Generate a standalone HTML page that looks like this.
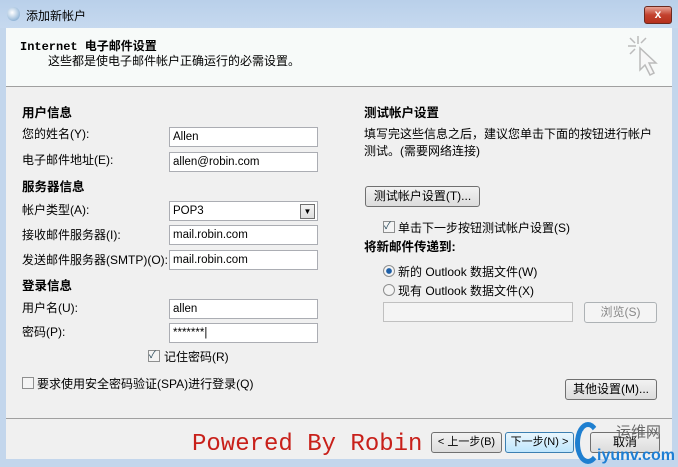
<!DOCTYPE html>
<html><head><meta charset="utf-8"><style>
*{box-sizing:border-box;margin:0;padding:0}
body{width:678px;height:467px;overflow:hidden;background:#c3d6ec;font-family:"Liberation Sans","Noto Sans CJK SC",sans-serif;font-size:12px;color:#000;position:relative}
.a{position:absolute;white-space:nowrap}
.title{left:0;top:0;width:678px;height:28px;background:linear-gradient(#b9d0ea,#c6d9ef)}
.hdr{left:6px;top:28px;width:666px;height:59px;background:#f7faf9;border-bottom:1px solid #a0a0a0}
.bodyp{left:6px;top:87px;width:666px;height:372px;background:#f0f0f0}
.inp{position:absolute;height:20px;border:1px solid #abadb3;background:#fff;padding:3px 3px;font-size:11.5px;line-height:13px}
.btn{position:absolute;height:21px;border:1px solid #707070;border-radius:3px;background:linear-gradient(#f2f2f2,#dcdcdc);text-align:center;line-height:19px;font-size:12px}
.h{font-weight:bold;font-size:12.5px}
.cb{position:absolute;width:12px;height:12px;border:1px solid #8e8f8f;background:#f4f4f4}
.rd{position:absolute;width:12px;height:12px;border:1px solid #8e8f8f;border-radius:50%;background:#f4f4f4}
</style></head><body>
<div class="a title"></div>
<div class="a" style="left:7px;top:7px;width:13px;height:14px;border-radius:50%;background:radial-gradient(circle at 40% 40%,#fff,#6a9ac8)"></div>
<div class="a" style="left:26px;top:7px;font-size:12px">添加新帐户</div>
<div class="a" style="left:644px;top:6px;width:28px;height:18px;border:1px solid #6b2a20;border-radius:3px;background:linear-gradient(#e8a396,#c3412e 50%,#b5301c);color:#fff;font-weight:bold;text-align:center;line-height:15px;font-size:12px">x</div>
<div class="a hdr"></div>
<div class="a" style="left:20px;top:37px;font-family:'Liberation Mono','Noto Sans CJK SC',monospace;font-weight:bold;font-size:12px">Internet 电子邮件设置</div>
<div class="a" style="left:48px;top:52px;font-size:12px">这些都是使电子邮件帐户正确运行的必需设置。</div>
<svg class="a" style="left:624px;top:32px" width="40" height="52"><g stroke="#bbb" stroke-width="1.5" fill="none"><path d="M14 4v8M4 14h8M6 6l5 5M22 6l-5 5M6 22l5-5"/><path d="M16 16l0 22 5-5 5 10 4-2-5-10 7 0z" fill="#f7f7f7"/></g></svg>
<div class="a bodyp"></div>

<div class="a h" style="left:22px;top:102px">用户信息</div>
<div class="a" style="left:22px;top:125px">您的姓名(Y):</div>
<div class="inp" style="left:169px;top:127px;width:149px">Allen</div>
<div class="a" style="left:22px;top:151px">电子邮件地址(E):</div>
<div class="inp" style="left:169px;top:152px;width:149px">allen@robin.com</div>
<div class="a h" style="left:22px;top:176px">服务器信息</div>
<div class="a" style="left:22px;top:201px">帐户类型(A):</div>
<div class="inp" style="left:169px;top:201px;width:149px">POP3</div>
<div class="a" style="left:300px;top:204px;width:15px;height:15px;border:1px solid #707070;background:linear-gradient(#f4f4f4,#ddd);font-size:8px;text-align:center;line-height:14px">▼</div>
<div class="a" style="left:22px;top:226px">接收邮件服务器(I):</div>
<div class="inp" style="left:169px;top:225px;width:149px">mail.robin.com</div>
<div class="a" style="left:22px;top:251px">发送邮件服务器(SMTP)(O):</div>
<div class="inp" style="left:169px;top:250px;width:149px">mail.robin.com</div>
<div class="a h" style="left:22px;top:275px">登录信息</div>
<div class="a" style="left:22px;top:299px">用户名(U):</div>
<div class="inp" style="left:169px;top:299px;width:149px">allen</div>
<div class="a" style="left:22px;top:323px">密码(P):</div>
<div class="inp" style="left:169px;top:323px;width:149px">*******|</div>
<div class="cb" style="left:148px;top:350px;font-size:10px;line-height:10px;color:#245">✓</div>
<div class="a" style="left:164px;top:348px">记住密码(R)</div>
<div class="cb" style="left:22px;top:377px"></div>
<div class="a" style="left:37px;top:375px">要求使用安全密码验证(SPA)进行登录(Q)</div>

<div class="a h" style="left:364px;top:102px">测试帐户设置</div>
<div class="a" style="left:364px;top:125px">填写完这些信息之后，建议您单击下面的按钮进行帐户</div>
<div class="a" style="left:364px;top:142px">测试。(需要网络连接)</div>
<div class="btn" style="left:365px;top:186px;width:115px">测试帐户设置(T)...</div>
<div class="cb" style="left:383px;top:221px;font-size:10px;line-height:10px;color:#245">✓</div>
<div class="a" style="left:398px;top:219px">单击下一步按钮测试帐户设置(S)</div>
<div class="a h" style="left:364px;top:236px">将新邮件传递到:</div>
<div class="rd" style="left:383px;top:265px;background:radial-gradient(circle,#1d5fa8 35%,#f4f4f4 45%)"></div>
<div class="a" style="left:398px;top:263px">新的 Outlook 数据文件(W)</div>
<div class="rd" style="left:383px;top:284px"></div>
<div class="a" style="left:398px;top:282px">现有 Outlook 数据文件(X)</div>
<div class="inp" style="left:383px;top:302px;width:190px;border-color:#c0c0c0;background:#f4f4f4"></div>
<div class="btn" style="left:584px;top:302px;width:73px;color:#888;border-color:#adb2b5;background:#f4f4f4">浏览(S)</div>
<div class="btn" style="left:565px;top:379px;width:92px">其他设置(M)...</div>

<div class="a" style="left:6px;top:418px;width:666px;border-top:1px solid #a0a0a0"></div>
<div class="btn" style="left:431px;top:432px;width:71px;font-size:11px">&lt; 上一步(B)</div>
<div class="btn" style="left:505px;top:432px;width:69px;font-size:11px;border-color:#3c7fb1;background:linear-gradient(#eaf6fd,#bee6fd)">下一步(N) &gt;</div>
<div class="btn" style="left:590px;top:432px;width:70px">取消</div>
<div class="a" style="left:192px;top:431px;font-family:'Liberation Mono',monospace;font-size:24px;color:#c8201a">Powered By Robin</div>
<div class="a" style="left:575px;top:422px;width:26px;height:42px;border:5px solid #1e7fd0;border-right-color:transparent;border-radius:50%"></div>
<div class="a" style="left:616px;top:421px;font-size:15px;color:#666">运维网</div>
<div class="a" style="left:597px;top:447px;font-size:16px;font-weight:bold;color:#1f7fd4">iyunv.com</div>
</body></html>
